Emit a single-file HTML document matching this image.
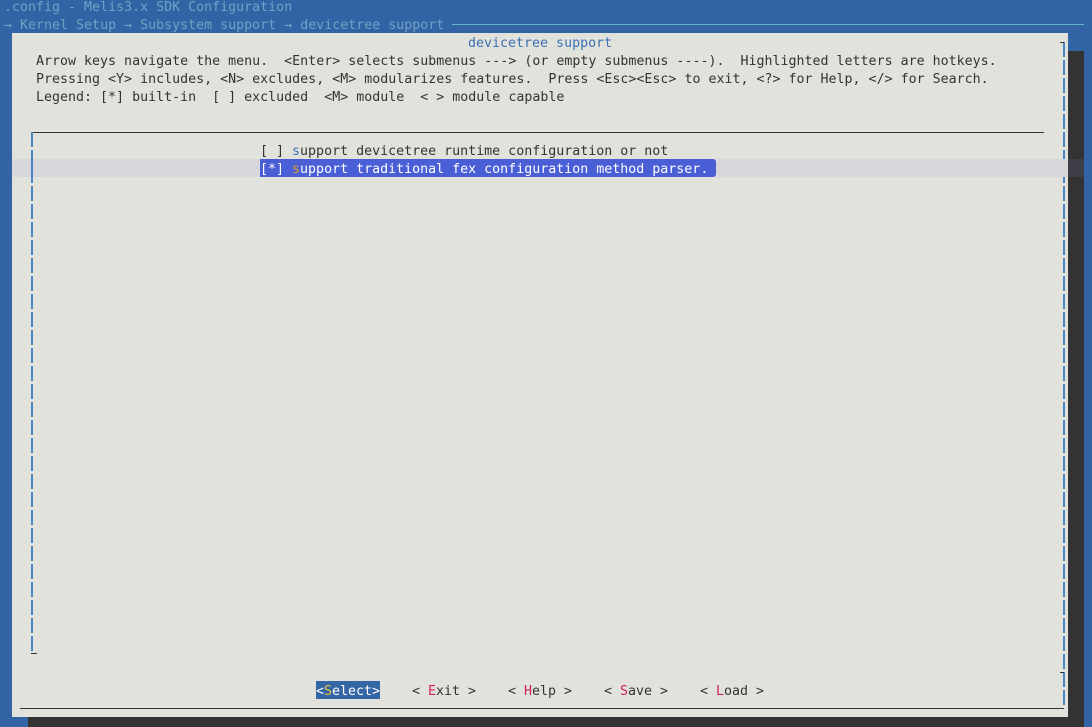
<!DOCTYPE html>
<html><head><meta charset="utf-8"><style>
*{margin:0;padding:0}
body{width:1092px;height:727px;background:#3163a5;position:relative;overflow:hidden;font-family:"DejaVu Sans Mono","Liberation Mono",monospace;font-size:13.3px;}
.t{position:absolute;white-space:pre;line-height:18px;height:18px;margin-top:2px}
.d{color:#333}
</style></head><body>
<div class="t" style="left:4px;top:-3px;color:#6fa3c4">.config - Melis3.x SDK Configuration</div>
<div class="t" style="left:4px;top:15px;color:#6fa3c4">→ Kernel Setup → Subsystem support → devicetree support</div>
<div style="position:absolute;left:452px;top:24px;width:632px;height:1px;background:#5fb7c4"></div>
<div style="position:absolute;left:28px;top:51px;width:1056px;height:676px;background:#333"></div>
<div style="position:absolute;left:12px;top:33px;width:1056px;height:684px;background:#e2e2dc"></div>
<div class="t" style="left:468px;top:33px;color:#3d71b3">devicetree support</div>
<div class="t d" style="left:36px;top:51px">Arrow keys navigate the menu.  &lt;Enter&gt; selects submenus ---&gt; (or empty submenus ----).  Highlighted letters are hotkeys.</div>
<div class="t d" style="left:36px;top:69px">Pressing &lt;Y&gt; includes, &lt;N&gt; excludes, &lt;M&gt; modularizes features.  Press &lt;Esc&gt;&lt;Esc&gt; to exit, &lt;?&gt; for Help, &lt;/&gt; for Search.</div>
<div class="t d" style="left:36px;top:87px">Legend: [*] built-in  [ ] excluded  &lt;M&gt; module  &lt; &gt; module capable</div>
<div style="position:absolute;left:31px;top:132px;width:1013px;height:1px;background:#333"></div>
<div style="position:absolute;left:31px;top:132px;width:2px;height:522px;background:repeating-linear-gradient(#4a86c0 0 15px,transparent 15px 18px)"></div>
<div style="position:absolute;left:31px;top:653px;width:6px;height:1px;background:#333"></div>
<div style="position:absolute;left:1063px;top:42px;width:2px;height:666px;background:repeating-linear-gradient(#4a86c0 0 15px,transparent 15px 18px)"></div>
<div style="position:absolute;left:1060px;top:42px;width:4px;height:1px;background:#333"></div>
<div style="position:absolute;left:1060px;top:672px;width:4px;height:1px;background:#333"></div>
<div style="position:absolute;left:20px;top:708px;width:1044px;height:1px;background:#333"></div>
<div style="position:absolute;left:12px;top:159px;width:1056px;height:18px;background:#d8d8dc"></div>
<div style="position:absolute;left:1068px;top:159px;width:16px;height:18px;background:#3e3e48"></div>
<div style="position:absolute;left:31px;top:159px;width:2px;height:18px;background:#4a86c0"></div>
<div class="t d" style="left:260px;top:141px">[ ] <span style="color:#3d71b3">s</span>upport devicetree runtime configuration or not</div>
<div style="position:absolute;left:260px;top:159px;width:456px;height:18px;background:#4a5ed6;border-radius:0 3px 3px 0"></div>
<div class="t" style="left:260px;top:159px;color:#fff">[*] <span style="color:#e0a030">s</span>upport traditional fex configuration method parser.</div>
<div style="position:absolute;left:316px;top:681px;width:64px;height:18px;background:#3465a5"></div>
<div class="t" style="left:316px;top:681px;color:#fff">&lt;<span style="color:#e8c040">S</span>elect&gt;</div>
<div class="t d" style="left:412px;top:681px">&lt; <span style="color:#d02060">E</span>xit &gt;</div>
<div class="t d" style="left:508px;top:681px">&lt; <span style="color:#d02060">H</span>elp &gt;</div>
<div class="t d" style="left:604px;top:681px">&lt; <span style="color:#d02060">S</span>ave &gt;</div>
<div class="t d" style="left:700px;top:681px">&lt; <span style="color:#d02060">L</span>oad &gt;</div>
</body></html>
